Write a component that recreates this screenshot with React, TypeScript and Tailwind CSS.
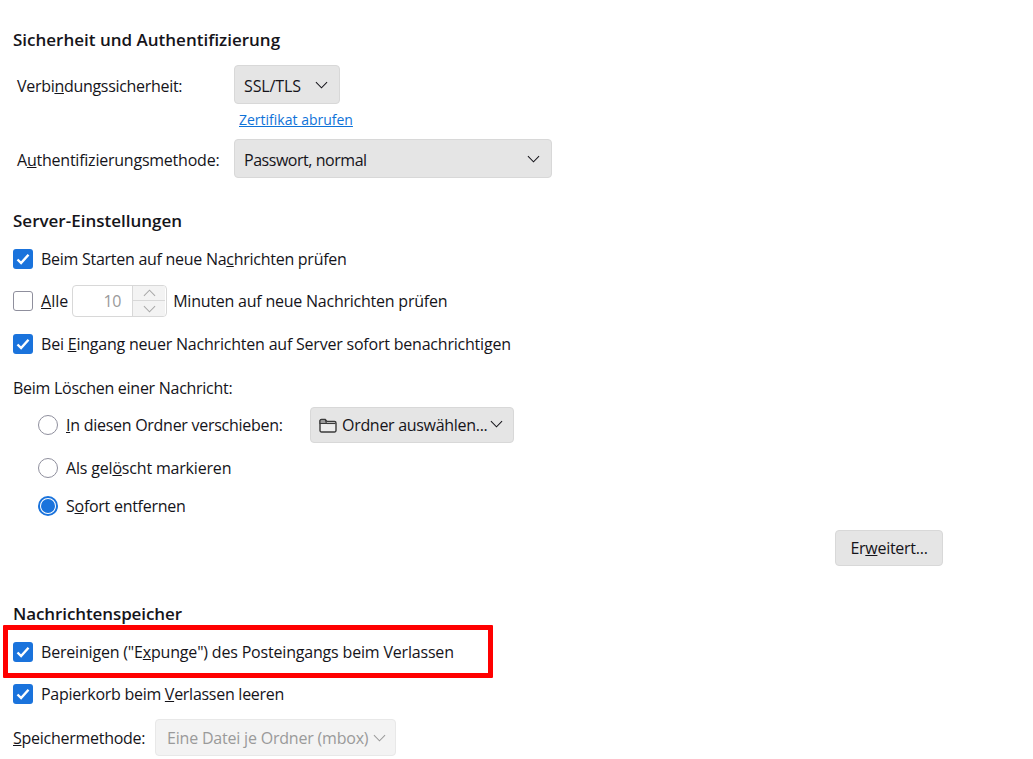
import React from "react";

const Chevron = ({ className = "" }: { className?: string }) => (
  <svg width="13" height="8" viewBox="0 0 14 8" fill="none" className={className}>
    <path d="M1 1l6 6 6-6" stroke="currentColor" strokeWidth="1.1" />
  </svg>
);

const Check = ({ checked = true }: { checked?: boolean }) =>
  checked ? (
    <span className="flex h-5 w-5 shrink-0 items-center justify-center rounded-[3px] bg-[#1a73dc]">
      <svg width="14" height="12" viewBox="0 0 14 12" fill="none">
        <path d="M1.5 6.500l3.600 3.600 7.400-8.400" stroke="#fff" strokeWidth="2.4" />
      </svg>
    </span>
  ) : (
    <span className="h-5 w-5 shrink-0 rounded-[3px] border border-[#8f8f9d] bg-white" />
  );

const Radio = ({ checked = false }: { checked?: boolean }) =>
  checked ? (
    <span className="flex h-5 w-5 shrink-0 items-center justify-center rounded-full border-2 border-[#1a73dc] bg-white">
      <span className="h-[14px] w-[14px] rounded-full bg-[#1a73dc]" />
    </span>
  ) : (
    <span className="h-5 w-5 shrink-0 rounded-full border border-[#8f8f9d] bg-white" />
  );

const Heading = ({ children, className = "" }: { children: React.ReactNode; className?: string }) => (
  <div className={`flex h-6 items-center text-[17px] font-semibold text-[#15141a] ${className}`}>{children}</div>
);

export default function App() {
  return (
    <div className="relative min-h-[759px] overflow-hidden bg-white pl-[13px] text-[16px] leading-[20px] tracking-[-0.27px] text-[#15141a] [font-family:'Open_Sans','Noto_Sans',sans-serif]">
      <Heading className="mt-[28px] tracking-normal">Sicherheit und Authentifizierung</Heading>

      <div className="mt-[13px] flex h-[39px] items-center pl-1">
        <span className="w-[217px] pt-[2px] tracking-[-0.3px]">Verbi<u>n</u>dungssicherheit:</span>
        <div className="flex h-[39px] w-[106px] items-center justify-between rounded-[4px] border border-[#d8d8d8] bg-[#e5e5e5] pl-[9px] pr-[11px]">
          <span className="pt-[2px] tracking-[-0.13px]">SSL/TLS</span>
          <Chevron />
        </div>
      </div>
      <div className="mt-[6px] h-[20px] pl-[226px] text-[14px] tracking-normal text-[#0f73d8] underline">Zertifikat abrufen</div>
      <div className="mt-[9px] flex h-[39px] items-center pl-1">
        <span className="w-[217px] whitespace-nowrap pt-[2px] tracking-[-0.23px]">A<u>u</u>thentifizierungsmethode:</span>
        <div className="flex h-[39px] w-[318px] items-center justify-between rounded-[4px] border border-[#d8d8d8] bg-[#e5e5e5] pl-[9px] pr-[11px]">
          <span className="pt-[2px] tracking-[-0.46px]">Passwort, normal</span>
          <Chevron />
        </div>
      </div>

      <Heading className="mt-[31px] tracking-normal">Server-Einstellungen</Heading>
      <div className="mt-[16px] flex h-5 items-center gap-2">
        <Check />
        <span>Beim Starten auf neue Na<u>c</u>hrichten prüfen</span>
      </div>
      <div className="mt-[22px] flex h-5 items-center">
        <Check checked={false} />
        <span className="ml-2 tracking-normal"><u>A</u>lle</span>
        <div className="ml-[4px] flex h-[32px] w-[95px] overflow-hidden rounded-[4px] border border-[#d8d8d8] bg-white">
          <div className="flex w-[59px] items-center justify-end pr-[11px] text-[#9a9a9a]">10</div>
          <div className="flex w-[33px] flex-col border-l border-[#d8d8d8] bg-[#f3f3f3] text-[#a8a8a8]">
            <div className="flex h-[15px] items-center justify-center border-b border-[#d8d8d8]"><Chevron className="rotate-180" /></div>
            <div className="flex flex-1 items-center justify-center"><Chevron /></div>
          </div>
        </div>
        <span className="ml-[6px] tracking-[-0.23px]">Minuten auf neue Nachrichten prüfen</span>
      </div>
      <div className="mt-[23px] flex h-5 items-center gap-2">
        <Check />
        <span className="tracking-[-0.21px]">Bei <u>E</u>ingang neuer Nachrichten auf Server sofort benachrichtigen</span>
      </div>
      <div className="mt-[24px] h-5">Beim Löschen einer Nachricht:</div>

      <div className="mt-[9px] flex h-[36px] items-center pl-[25px]">
        <Radio />
        <span className="ml-2 w-[244px]"><u>I</u>n diesen Ordner verschieben:</span>
        <div className="flex h-[36px] w-[204px] items-center rounded-[4px] border border-[#d8d8d8] bg-[#e5e5e5] pl-2">
          <svg width="18" height="15" viewBox="0 0 18 15" fill="none" className="shrink-0">
            <path d="M1 12.500V3a1.500 1.500 0 0 1 1.500-1.500h3.700L8 3.500h7.500A1.500 1.500 0 0 1 17 5v7.500a1.500 1.500 0 0 1-1.500 1.500h-13A1.500 1.500 0 0 1 1 12.500Z" fill="#ececec" stroke="#3a3a3a" strokeWidth="1.4" />
            <path d="M1 5.500h6.500L6.200 1.500H2.500A1.500 1.500 0 0 0 1 3Z" fill="#9a9a9a" stroke="#3a3a3a" strokeWidth="1.1" />
            <path d="M7.500 5.500h9" stroke="#3a3a3a" strokeWidth="1.1" />
          </svg>
          <span className="ml-[5px] whitespace-nowrap tracking-[-0.3px]">Ordner auswählen...</span>
          <Chevron className="ml-[3px] mb-[2px]" />
        </div>
      </div>
      <div className="mt-[15px] flex h-5 items-center pl-[25px]">
        <Radio />
        <span className="ml-2 tracking-[-0.18px]">Als gel<u>ö</u>scht markieren</span>
      </div>
      <div className="mt-[18px] flex h-5 items-center pl-[25px]">
        <Radio checked />
        <span className="ml-2">S<u>o</u>fort entfernen</span>
      </div>

      <div className="mt-[14px] flex h-[36px] w-[930px] justify-end">
        <div className="flex h-[36px] w-[108px] items-center justify-center rounded-[4px] border border-[#d8d8d8] bg-[#e5e5e5]">Er<u>w</u>eitert...</div>
      </div>

      <Heading className="mt-[36px] tracking-[-0.1px]">Nachrichtenspeicher</Heading>
      <div className="mt-[16px] flex h-5 items-center gap-2">
        <Check />
        <span className="tracking-[-0.185px]">Bereinigen ("E<u>x</u>punge") des Posteingangs beim Verlassen</span>
      </div>
      <div className="mt-[22px] flex h-5 items-center gap-2">
        <Check />
        <span>Papierkorb beim <u>V</u>erlassen leeren</span>
      </div>
      <div className="mt-[15px] flex h-[37px] items-center">
        <span className="w-[142px]"><u>S</u>peichermethode:</span>
        <div className="flex h-[37px] w-[241px] items-center justify-between rounded-[4px] border border-[#e8e8e8] bg-[#f3f3f3] pl-[11px] pr-[9px] text-[#9a9a9a]">
          <span className="whitespace-nowrap tracking-[-0.2px]">Eine Datei je Ordner (mbox)</span>
          <Chevron />
        </div>
      </div>

      <div className="absolute left-[3px] top-[625px] h-[53px] w-[490px] rounded-[1px] border-[5px] border-[#ff0000]" />
    </div>
  );
}
